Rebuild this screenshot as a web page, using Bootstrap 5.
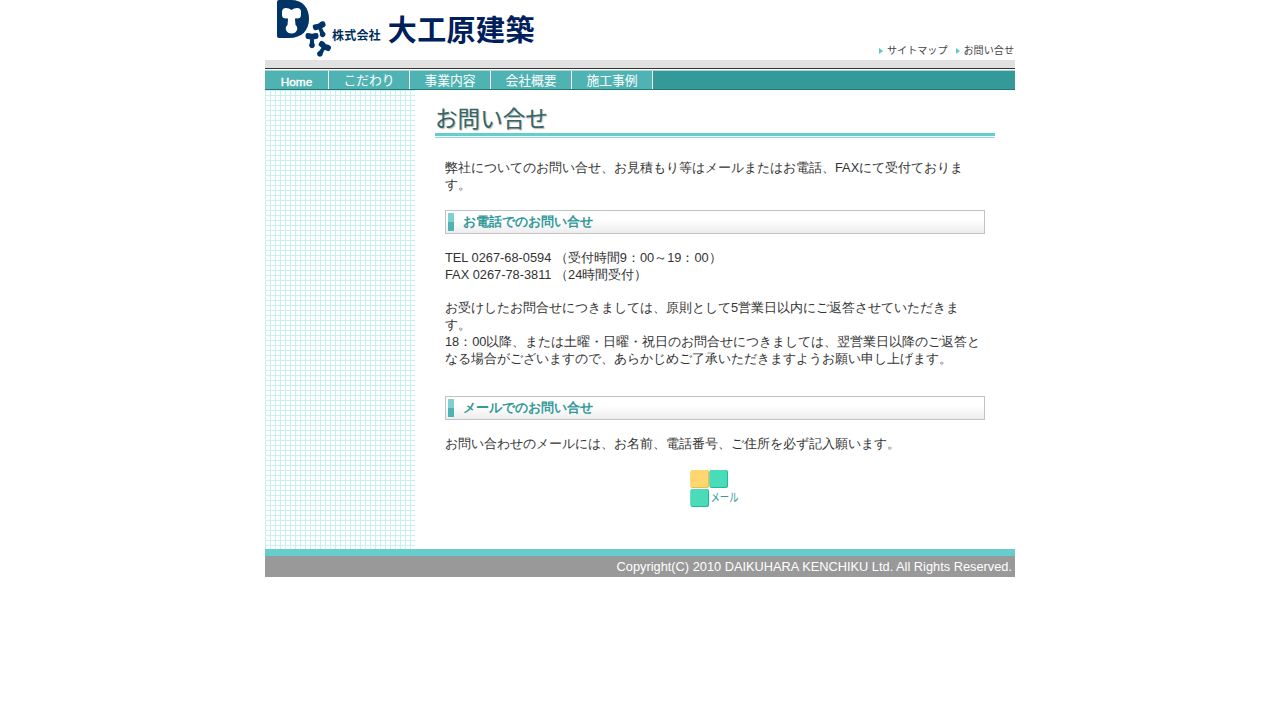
<!DOCTYPE html>
<html lang="ja">
<head>
<meta charset="utf-8">
<meta name="viewport" content="width=device-width, initial-scale=1">
<title>お問い合せ | 株式会社 大工原建築</title>
<link href="https://cdn.jsdelivr.net/npm/bootstrap@5.3.0/dist/css/bootstrap.min.css" rel="stylesheet">
<style>
body{font:12.8px/17px "Liberation Sans",sans-serif;color:#333;background:#fff}
.page{width:750px}
.site-head{height:60px;padding-left:12px}
.logo-mark{width:56px;height:60px}
.co-kind{font-size:12px;font-weight:700;color:#00305c;line-height:16px;padding-top:27px;margin-left:-1px;letter-spacing:.2px}
.co-name{font-size:29px;font-weight:700;color:#00205b;line-height:36px;padding-top:10px;margin-left:7px;letter-spacing:.4px}
.head-links{padding-top:43px;padding-right:1px}
.head-links a{font-size:10.1px;line-height:13px;color:#444;height:13px}
.tri{width:4px;height:6px;margin:2px 4px 0 0}
.site-head,.main-nav a,.page-title,.mail-label{font-family:"Noto Sans CJK JP",sans-serif}
.grey-bar{height:8px;background:#e1e1e1}
.dark-bar{height:1px;background:#333}
.main-nav{margin-top:1px;height:20px;background:#399;border-top:1px solid #a5d5d5;border-bottom:1px solid #277}
.main-nav a{width:81px;height:18px;background:#50b3b3;color:#fff;border-right:1px solid #fff;font-size:12.8px;line-height:18px}
.main-nav .home{width:64px;font-family:"Liberation Sans",sans-serif;font-size:11.8px;-webkit-text-stroke:.4px #fff;line-height:22px}
.side{width:150px;background:linear-gradient(90deg,#c8f0ee 1px,transparent 1px) 0 0/5px 5px,linear-gradient(#c8f0ee 1px,transparent 1px) 0 0/5px 5px}
.content{width:600px;height:459px;padding:14px 20px 0}
.page-title{height:29px;font-size:22.6px;line-height:28px;font-weight:400;color:#366;text-shadow:1px 1px 1px #bbb;margin:0}
.title-rule{height:5px;border-top:3px solid #6cc;border-bottom:1px solid #8dd}
.text-area{padding:21px 10px 0}
.bar-title{height:24px;border:1px solid #c2c2c2;background:linear-gradient(#fff 40%,#ededed);color:#399;font-size:12.8px;line-height:22px;font-weight:700;padding-left:2px;margin:0}
.bar-mark{width:6px;height:18px;background:linear-gradient(#7fd0d0 50%,#50b3b3 50%);margin-right:9px}
.text-area p{margin:0 0 16px}
.text-area p.intro{margin-bottom:17px}
.text-area .after-bar{padding-top:15px}
.text-area .bar-mail{margin-top:29px}
.mail-link{margin-top:17px;width:50px}
.foot-rule{height:7px;background:#6cc}
.site-foot{height:21px;background:#999;color:#fff;line-height:21px;padding-right:3px}
</style>
</head>
<body>
<div class="page mx-auto">
  <header class="site-head d-flex">
    <svg class="logo-mark" viewBox="0 0 56 60">
      <defs><path id="mallet" d="M-6-4Q-6-6-4-6Q-2-6-1-5.500Q0-5 1-5.500Q2-6 4-6Q6-6 6-4V-2.500Q6-.5 4-.5Q2-.5 1.700 0L2 3.500Q3.200 5 2.400 6.500Q1.500 8 0 8Q-1.500 8-2.400 6.500Q-3.200 5-2 3.500L-1.700 0Q-2-.5-4-.5Q-6-.5-6-2.500Z"/></defs>
      <path fill="#036" d="M2 0H14C26 0 32 8 32 19S25 38 12 38H2Q0 38 0 36V2Q0 0 2 0Z"/>
      <path fill="#fff" d="M5 12Q5 8 9 8Q12 8 14.500 10Q17 8 20 8Q24 8 24 12V15Q24 18.500 20 18.500Q18 18 18 19L18.500 25Q21 27 20 30Q18.500 33.500 14.500 33.500Q10.500 33.500 9 30Q8 27 10.500 25L11 19Q11 18 9 18.500Q5 18.500 5 15Z"/>
      <g fill="#036"><use href="#mallet" transform="translate(43.500 29) rotate(-22) scale(1.080)"/><use href="#mallet" transform="translate(35 39.500) scale(1.080)"/><use href="#mallet" transform="translate(46 49) rotate(32) scale(1.080)"/></g>
    </svg>
    <div class="co-kind">株式会社</div>
    <div class="co-name">大工原建築</div>
    <div class="head-links d-flex ms-auto">
      <a class="text-decoration-none d-flex align-items-center me-2" href="#"><svg class="tri" viewBox="0 0 4 6"><path fill="#5cc" d="M0 0L4 3L0 6Z"/></svg><span>サイトマップ</span></a>
      <a class="text-decoration-none d-flex align-items-center" href="#"><svg class="tri" viewBox="0 0 4 6"><path fill="#5cc" d="M0 0L4 3L0 6Z"/></svg><span>お問い合せ</span></a>
    </div>
  </header>
  <div class="grey-bar"></div>
  <div class="dark-bar"></div>
  <nav class="main-nav d-flex text-center">
    <a class="home text-decoration-none" href="#">Home</a>
    <a class="text-decoration-none" href="#">こだわり</a>
    <a class="text-decoration-none" href="#">事業内容</a>
    <a class="text-decoration-none" href="#">会社概要</a>
    <a class="text-decoration-none" href="#">施工事例</a>
  </nav>
  <div class="d-flex">
    <aside class="side"></aside>
    <main class="content">
      <h1 class="page-title">お問い合せ</h1>
      <div class="title-rule"></div>
      <div class="text-area">
        <p class="intro">弊社についてのお問い合せ、お見積もり等はメールまたはお電話、FAXにて受付ております。</p>
        <h2 class="bar-title d-flex align-items-center"><span class="bar-mark"></span>お電話でのお問い合せ</h2>
        <p class="after-bar">TEL 0267-68-0594 （受付時間9：00～19：00）<br>FAX 0267-78-3811 （24時間受付）</p>
        <p>お受けしたお問合せにつきましては、原則として5営業日以内にご返答させていただきます。<br>18：00以降、または土曜・日曜・祝日のお問合せにつきましては、翌営業日以降のご返答となる場合がございますので、あらかじめご了承いただきますようお願い申し上げます。</p>
        <h2 class="bar-title bar-mail d-flex align-items-center"><span class="bar-mark"></span>メールでのお問い合せ</h2>
        <p class="after-bar">お問い合わせのメールには、お名前、電話番号、ご住所を必ず記入願います。</p>
        <a class="mail-link d-block mx-auto" href="#" aria-label="メール">
          <svg class="d-block overflow-visible" width="50" height="39" viewBox="0 0 50 39">
            <rect x=".5" y="1" width="18.500" height="18" rx="2" fill="#eb4"/><rect x=".5" y="1" width="17.500" height="17" rx="2" fill="#ffd76e"/>
            <rect x="19.500" y="1" width="18.500" height="18" rx="2" fill="#2b9"/><rect x="19.500" y="1" width="17.500" height="17" rx="2" fill="#4adbb8"/>
            <rect x=".5" y="20" width="18.500" height="18" rx="2" fill="#2b9"/><rect x=".5" y="20" width="17.500" height="17" rx="2" fill="#4adbb8"/>
            <text class="mail-label" transform="translate(20.500 33) scale(.78 1)" font-size="12" fill="#399">メール</text>
          </svg>
        </a>
      </div>
    </main>
  </div>
  <div class="foot-rule"></div>
  <footer class="site-foot text-end">Copyright(C) 2010 DAIKUHARA KENCHIKU Ltd. All Rights Reserved.</footer>
</div>
<script src="https://cdn.jsdelivr.net/npm/bootstrap@5.3.0/dist/js/bootstrap.bundle.min.js"></script>
</body>
</html>
